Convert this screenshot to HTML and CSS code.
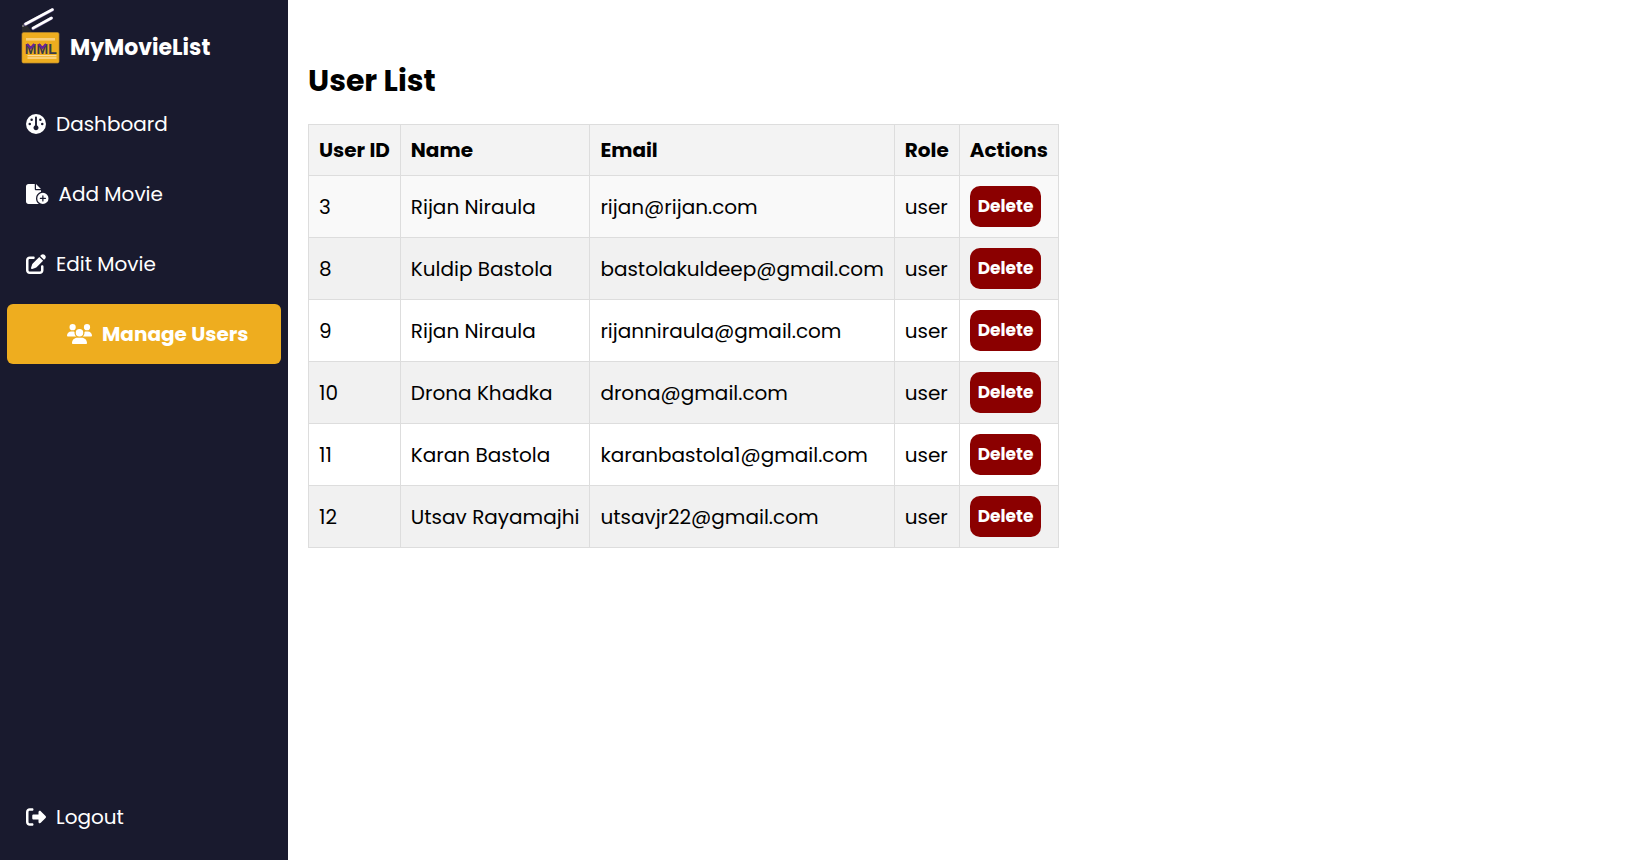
FILE: index.html
```html
<!DOCTYPE html>
<html lang="en">
<head>
<meta charset="utf-8">
<meta name="viewport" content="width=device-width, initial-scale=1">
<title>MyMovieList - User List</title>
<link rel="stylesheet" href="styles.css">
</head>
<body>
<aside class="sidebar">
  <div class="brand">
    <svg class="brand-logo" viewBox="0 0 40 58" aria-hidden="true">
      <path d="M2 17l3-1 7 9H2z" fill="#2b2b2d"/>
      <circle cx="3" cy="19" r="1" fill="#8a8a8a"/>
      <path d="M5 17.5L32.5 2.8M13 21.500L31.500 11.200" stroke="#6a5a8c" stroke-width="3.200" stroke-linecap="round"/>
      <path d="M5.500 17L32.500 2.500M13 21.200L31.500 11" stroke="#fff" stroke-width="2.600" stroke-linecap="round"/>
      <rect x="2" y="25.500" width="37" height="30.500" rx="1.500" fill="#eead1f" stroke="#b98a2b" stroke-width=".7"/>
      <rect x="6" y="31" width="29" height="2.600" fill="#f8cf7c"/>
      <path d="M7.500 48.700h29M7.500 51h29" stroke="#fbdc9b" stroke-width="1.300"/>
      <text class="logo-text" x="20.800" y="46.500" text-anchor="middle">MML</text>
      <path d="M7 37l3.700 4 3.700-4M18.700 37l3.700 4 3.700-4" fill="none" stroke="#6a2496" stroke-width="2.200"/>
    </svg>
    <span>MyMovieList</span>
  </div>
  <nav class="nav">
    <a class="nav-link" href="#"><svg class="icon" viewBox="0 0 512 512" aria-hidden="true"><path d="M0 256a256 256 0 1 1 512 0A256 256 0 1 1 0 256zm320 96c0-26.900-16.500-49.900-40-59.300V88c0-13.300-10.700-24-24-24s-24 10.700-24 24V292.700c-23.500 9.500-40 32.500-40 59.300c0 35.300 28.700 64 64 64s64-28.700 64-64zM144 176a32 32 0 1 0 0-64 32 32 0 1 0 0 64zm-16 80a32 32 0 1 0 -64 0 32 32 0 1 0 64 0zm288 32a32 32 0 1 0 0-64 32 32 0 1 0 0 64zM400 144a32 32 0 1 0 -64 0 32 32 0 1 0 64 0z"/></svg>Dashboard</a>
    <a class="nav-link" href="#"><svg class="icon" viewBox="0 0 576 512" aria-hidden="true"><path d="M0 64C0 28.700 28.700 0 64 0H224V128c0 17.700 14.300 32 32 32H384v38.600C310.100 219.500 256 287.400 256 368c0 59.100 29.100 111.300 73.700 143.300c-3.200 .5-6.400 .7-9.700 .7H64c-35.300 0-64-28.700-64-64V64zm384 64H256V0L384 128zm48 96a144 144 0 1 1 0 288 144 144 0 1 1 0-288zm16 80c0-8.800-7.200-16-16-16s-16 7.200-16 16v48H368c-8.800 0-16 7.200-16 16s7.200 16 16 16h48v48c0 8.800 7.200 16 16 16s16-7.200 16-16V384h48c8.800 0 16-7.200 16-16s-7.200-16-16-16H448V304z"/></svg>Add Movie</a>
    <a class="nav-link" href="#"><svg class="icon" viewBox="0 0 512 512" aria-hidden="true"><path d="M471.600 21.700c-21.900-21.900-57.300-21.900-79.200 0L362.300 51.700l97.900 97.900 30.100-30.100c21.900-21.900 21.900-57.300 0-79.200L471.600 21.700zm-299.200 220c-6.100 6.100-10.800 13.600-13.500 21.900l-29.600 88.800c-2.900 8.600-.6 18.100 5.800 24.600s15.900 8.700 24.600 5.800l88.800-29.600c8.200-2.700 15.700-7.400 21.900-13.500L437.700 172.300 339.700 74.300 172.400 241.700zM96 64C43 64 0 107 0 160V416c0 53 43 96 96 96H352c53 0 96-43 96-96V320c0-17.700-14.300-32-32-32s-32 14.300-32 32v96c0 17.700-14.300 32-32 32H96c-17.700 0-32-14.300-32-32V160c0-17.700 14.300-32 32-32h96c17.700 0 32-14.300 32-32s-14.300-32-32-32H96z"/></svg>Edit Movie</a>
    <a class="nav-link active" href="#" aria-current="page"><svg class="icon" viewBox="0 0 640 512" aria-hidden="true"><path d="M144 0a80 80 0 1 1 0 160A80 80 0 1 1 144 0zM512 0a80 80 0 1 1 0 160A80 80 0 1 1 512 0zM0 298.700C0 239.800 47.800 192 106.700 192h42.700c15.900 0 31 3.500 44.600 9.700c-1.300 7.200-1.900 14.700-1.900 22.300c0 38.200 16.800 72.500 43.300 96c-.2 0-.4 0-.7 0H21.300C9.600 320 0 310.400 0 298.700zM405.300 320c-.2 0-.4 0-.7 0c26.600-23.500 43.300-57.800 43.300-96c0-7.600-.7-15-1.900-22.300c13.600-6.300 28.700-9.700 44.600-9.700h42.700C592.200 192 640 239.800 640 298.700c0 11.800-9.600 21.300-21.300 21.300H405.300zM224 224a96 96 0 1 1 192 0 96 96 0 1 1 -192 0zM128 485.300C128 411.700 187.700 352 261.300 352H378.700C452.300 352 512 411.700 512 485.300c0 14.700-11.900 26.700-26.700 26.700H154.700c-14.700 0-26.700-11.900-26.700-26.700z"/></svg>Manage Users</a>
    <a class="nav-link logout" href="#"><svg class="icon" viewBox="0 0 512 512" aria-hidden="true"><path d="M377.900 105.900L500.700 228.700c7.200 7.200 11.300 17.100 11.300 27.300s-4.100 20.100-11.300 27.300L377.900 406.100c-6.400 6.400-15 9.900-24 9.900c-18.700 0-33.900-15.200-33.900-33.900l0-62.100-128 0c-17.700 0-32-14.300-32-32l0-64c0-17.700 14.300-32 32-32l128 0 0-62.100c0-18.700 15.200-33.900 33.900-33.900c9 0 17.600 3.600 24 9.900zM160 96L96 96c-17.700 0-32 14.300-32 32l0 256c0 17.700 14.300 32 32 32l64 0c17.700 0 32 14.300 32 32s-14.300 32-32 32l-64 0c-53 0-96-43-96-96L0 128C0 75 43 32 96 32l64 0c17.700 0 32 14.300 32 32s-14.300 32-32 32z"/></svg>Logout</a>
  </nav>
</aside>
<main class="content">
  <h1 class="title">User List</h1>
  <table class="users">
    <thead>
      <tr><th>User ID</th><th>Name</th><th>Email</th><th>Role</th><th>Actions</th></tr>
    </thead>
    <tbody>
      <tr class="highlighted"><td>3</td><td>Rijan Niraula</td><td>rijan@rijan.com</td><td>user</td><td><button class="delete" type="button">Delete</button></td></tr>
      <tr><td>8</td><td>Kuldip Bastola</td><td>bastolakuldeep@gmail.com</td><td>user</td><td><button class="delete" type="button">Delete</button></td></tr>
      <tr><td>9</td><td>Rijan Niraula</td><td>rijanniraula@gmail.com</td><td>user</td><td><button class="delete" type="button">Delete</button></td></tr>
      <tr><td>10</td><td>Drona Khadka</td><td>drona@gmail.com</td><td>user</td><td><button class="delete" type="button">Delete</button></td></tr>
      <tr><td>11</td><td>Karan Bastola</td><td>karanbastola1@gmail.com</td><td>user</td><td><button class="delete" type="button">Delete</button></td></tr>
      <tr><td>12</td><td>Utsav Rayamajhi</td><td>utsavjr22@gmail.com</td><td>user</td><td><button class="delete" type="button">Delete</button></td></tr>
    </tbody>
  </table>
</main>
</body>
</html>
```
FILE: styles.css
```css
* {
  box-sizing: border-box;
}

body {
  display: flex;
  min-height: 100vh;
  margin: 0;
  background: #fff;
  color: #000;
  font-family: Poppins, Inter, "Open Sans", sans-serif;
  font-size: 20px;
  line-height: 30px;
}

.sidebar {
  display: flex;
  flex-direction: column;
  flex: 0 0 288px;
  padding: 7px 7px 13px;
  background: #191a2e;
  color: #fff;
}

.brand {
  display: flex;
  align-items: center;
  gap: 10px;
  padding-left: 13px;
  font-size: 22px;
  font-weight: 700;
}

.brand span {
  padding-top: 24px;
}

.brand-logo {
  width: 40px;
  height: 58px;
}

.logo-text {
  font-family: "Liberation Sans", Arial, sans-serif;
  font-size: 14px;
  font-weight: 700;
  fill: #3a3a48;
}

.nav {
  display: flex;
  flex: 1;
  flex-direction: column;
  gap: 10px;
  margin-top: 29px;
}

.nav-link {
  display: flex;
  align-items: center;
  gap: 10px;
  padding: 15px 19px;
  border-radius: 6px;
  color: #fff;
  text-decoration: none;
}

.nav-link.active {
  padding-left: 60px;
  background: #eead1f;
  font-weight: 700;
}

.logout {
  margin-top: auto;
}

.icon {
  flex: none;
  height: 20px;
  fill: currentColor;
}

.content {
  flex: 1;
  padding: 58px 20px 20px;
}

.title {
  margin: 0 0 21px;
  font-size: 30px;
  font-weight: 700;
  line-height: 45px;
}

.users {
  border-collapse: collapse;
}

.users th,
.users td {
  padding: 10px;
  border: 1px solid #ddd;
  text-align: left;
  white-space: nowrap;
}

.users th {
  background: #f3f3f3;
  font-weight: 700;
}

.users tbody tr:nth-child(even) {
  background: #f1f1f1;
}

.users tbody .highlighted {
  background: #f9f9f9;
}

.delete {
  display: block;
  padding: 8px;
  border: 0;
  border-radius: 10px;
  background: #8b0000;
  color: #fff;
  font-family: inherit;
  font-size: 17px;
  font-weight: 700;
  line-height: 25px;
}
```
